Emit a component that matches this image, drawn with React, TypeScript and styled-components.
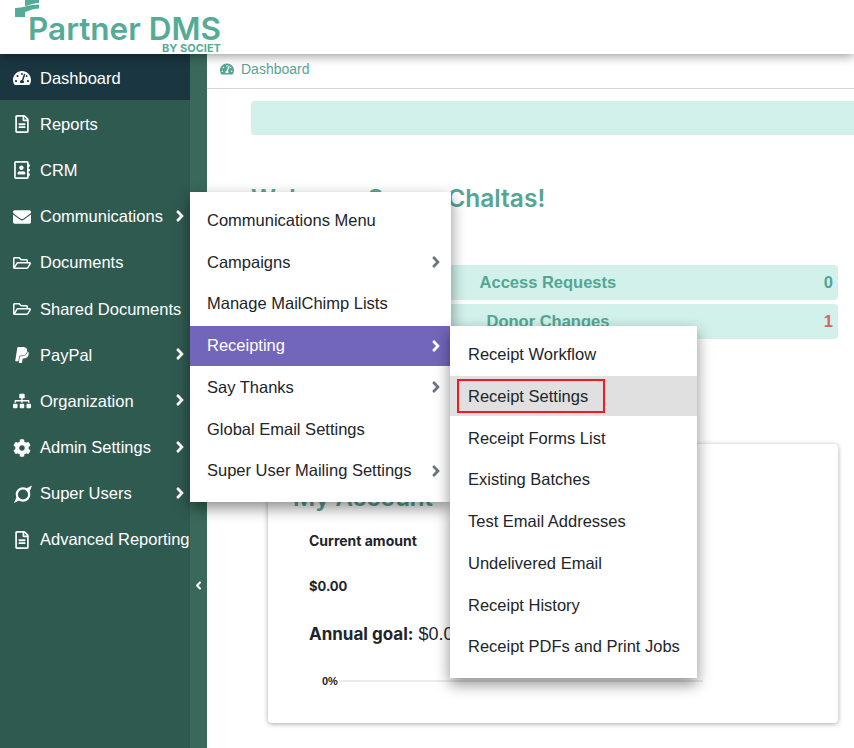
import styled, { createGlobalStyle } from "styled-components";
import {
  FaTachometerAlt,
  FaRegFileAlt,
  FaRegAddressBook,
  FaEnvelope,
  FaRegFolderOpen,
  FaPaypal,
  FaSitemap,
  FaCog,
  FaAngleRight,
  FaAngleLeft,
} from "react-icons/fa";

const Global = createGlobalStyle`
  html, body { margin: 0; padding: 0; }
  body {
    background: #fff;
    font-family: "Liberation Sans", Arial, sans-serif;
    font-size: 16.5px;
    color: #212529;
    overflow: hidden;
  }
`;

const Page = styled.div`
  width: 854px;
  height: 748px;
  overflow: hidden;
  display: flex;
  flex-direction: column;
`;

const Header = styled.header`
  height: 54px;
  flex: none;
  background: #fff;
  position: relative;
  z-index: 5;
  box-shadow: 0 2px 10px rgba(0, 0, 0, 0.4);
  display: flex;
  padding-left: 15px;
`;

const LogoWrap = styled.div`
  display: flex;
  flex-direction: column;
  align-items: flex-start;
`;

const LogoMark = styled.svg`
  display: block;
  width: 25px;
  height: 17px;
`;

const LogoName = styled.div`
  font-family: Inter, "Liberation Sans", sans-serif;
  font-weight: 600;
  font-size: 31.5px;
  line-height: 24px;
  color: #55ab96;
  margin: 0 0 0 13px;
  white-space: nowrap;
`;

const LogoSub = styled.div`
  font-family: Inter, "Liberation Sans", sans-serif;
  font-weight: 700;
  font-size: 11px;
  line-height: 10px;
  color: #55ab96;
  align-self: flex-end;
  margin: 2px 0 0 0;
`;

const Body = styled.div`
  flex: 1;
  display: flex;
  min-height: 0;
`;

const Sidebar = styled.aside`
  width: 207px;
  flex: none;
  display: flex;
  background: #39695b;
  position: relative;
  z-index: 4;
`;

const Nav = styled.nav`
  width: 190px;
  flex: none;
  background: #2f5a50;
`;

const Strip = styled.div`
  flex: 1;
  display: flex;
  align-items: flex-start;
  justify-content: center;
  padding-top: 525px;
  color: #fff;
  font-size: 13px;
`;

const NavItem = styled.div<{ $active?: boolean }>`
  position: relative;
  height: 46.2px;
  box-sizing: border-box;
  display: flex;
  align-items: center;
  padding: 2px 0 0 13px;
  color: #fff;
  white-space: nowrap;
  background: ${({ $active }) => ($active ? "#1a3640" : "transparent")};
`;

const NavIcon = styled.span`
  width: 27px;
  flex: none;
  display: flex;
  font-size: 18px;
`;

const NavArrow = styled.span`
  position: absolute;
  left: 171px;
  top: 14px;
  display: flex;
  font-size: 18px;
`;

const Menu = styled.div<{ $left: number; $width: number; $top: number; $pad: number }>`
  position: absolute;
  top: ${({ $top }) => $top}px;
  left: ${({ $left }) => $left}px;
  width: ${({ $width }) => $width}px;
  padding: ${({ $pad }) => $pad}px 0 9.5px;
  box-sizing: border-box;
  background: #fff;
  color: #212529;
  box-shadow: 0 6px 14px rgba(0, 0, 0, 0.45);
  z-index: 6;
`;

const MenuRow = styled.div<{ $active?: boolean; $hover?: boolean; $inset: number }>`
  position: relative;
  height: 40px;
  margin-bottom: 1.75px;
  display: flex;
  align-items: center;
  justify-content: space-between;
  padding: 0 6px 0 ${({ $inset }) => $inset}px;
  background: ${({ $active, $hover }) => ($active ? "#7266bb" : $hover ? "#e0e0e0" : "transparent")};
  color: ${({ $active }) => ($active ? "#fff" : "#212529")};
`;

const MenuArrow = styled.span<{ $light?: boolean }>`
  display: flex;
  font-size: 18px;
  color: ${({ $light }) => ($light ? "#fff" : "#6c757d")};
`;

const Outlined = styled.span`
  border: 2px solid #ed1c24;
  margin-left: -11px;
  padding: 0 15px 0 9px;
  height: 30px;
  display: flex;
  align-items: center;
`;

const Main = styled.main`
  flex: 1;
  min-width: 0;
  display: flex;
  flex-direction: column;
`;

const Crumb = styled.div`
  height: 30px;
  flex: none;
  border-bottom: 1px solid #d6d6d6;
  display: flex;
  align-items: center;
  gap: 7px;
  padding: 0 0 4px 13px;
  font-size: 14px;
  color: #55a595;
  svg {
    font-size: 14px;
  }
`;

const Content = styled.div`
  flex: 1;
  padding: 12px 16px 0 44px;
  display: flex;
  flex-direction: column;
`;

const Banner = styled.div`
  height: 34px;
  margin-right: -16px;
  background: #d2f1eb;
  border-radius: 4px 0 0 4px;
  flex: none;
`;

const Welcome = styled.h1`
  margin: 49px 0 0;
  font-family: Inter, "Liberation Sans", sans-serif;
  font-size: 24.5px;
  line-height: 29px;
  font-weight: 600;
  color: #55a595;
`;

const Stats = styled.div`
  margin-top: 52px;
  display: flex;
  flex-direction: column;
  gap: 4px;
`;

const Stat = styled.div`
  height: 35px;
  background: #d2f1eb;
  border-radius: 4px;
  display: flex;
  align-items: center;
  padding: 0 5px 0 21px;
  font-weight: 700;
  color: #55a595;
`;

const StatLabel = styled.span`
  flex: 1;
  text-align: center;
`;

const StatCount = styled.span<{ $alert?: boolean }>`
  color: ${({ $alert }) => ($alert ? "#d0675f" : "#55a595")};
`;

const Card = styled.section`
  margin: 105px 0 0 17px;
  height: 279px;
  flex: none;
  box-sizing: border-box;
  padding: 39px 25px 0;
  background: #fff;
  border-radius: 4px;
  box-shadow: 0 1px 5px rgba(0, 0, 0, 0.35);
`;

const CardTitle = styled.h2`
  margin: 0;
  font-family: Inter, "Liberation Sans", sans-serif;
  font-size: 24px;
  line-height: 29px;
  font-weight: 600;
  color: #55a595;
`;

const Small = styled.div<{ $top: number; $size: number }>`
  font-family: Inter, "Liberation Sans", sans-serif;
  font-size: ${({ $size }) => $size}px;
  line-height: 16px;
  font-weight: 700;
  color: #212529;
  margin: ${({ $top }) => $top}px 0 0 16px;
`;

const Goal = styled.div`
  font-size: 18px;
  line-height: 22px;
  margin: 29px 0 0 16px;
  color: #212529;
  b {
    font-family: Inter, "Liberation Sans", sans-serif;
    font-weight: 700;
    font-size: 17px;
  }
`;

const Progress = styled.div`
  margin: 30px 0 0 29px;
  width: 381px;
  display: flex;
  align-items: center;
  gap: 1px;
  font-size: 11px;
  font-weight: 700;
  color: #212529;
  &::after {
    content: "";
    flex: 1;
    height: 2px;
    background: #e9ecef;
  }
`;

const receiptMenu = [
  "Receipt Workflow",
  "Receipt Settings",
  "Receipt Forms List",
  "Existing Batches",
  "Test Email Addresses",
  "Undelivered Email",
  "Receipt History",
  "Receipt PDFs and Print Jobs",
];

const commsMenu = [
  { label: "Communications Menu" },
  { label: "Campaigns", more: true },
  { label: "Manage MailChimp Lists" },
  { label: "Receipting", more: true, active: true },
  { label: "Say Thanks", more: true },
  { label: "Global Email Settings" },
  { label: "Super User Mailing Settings", more: true },
];

function SuperIcon() {
  return (
    <svg width="20" height="20" viewBox="0 0 20 20" fill="none" stroke="currentColor">
      <circle cx="10" cy="10.5" r="6.2" strokeWidth="2.2" />
      <path d="M13 4.5 L19 1.5 L16.5 8" fill="currentColor" stroke="none" />
      <path d="M7 16 L1 19 L3.5 13" fill="currentColor" stroke="none" />
    </svg>
  );
}

const nav = [
  { label: "Dashboard", icon: <FaTachometerAlt />, active: true },
  { label: "Reports", icon: <FaRegFileAlt /> },
  { label: "CRM", icon: <FaRegAddressBook /> },
  { label: "Communications", icon: <FaEnvelope />, more: true, open: true },
  { label: "Documents", icon: <FaRegFolderOpen /> },
  { label: "Shared Documents", icon: <FaRegFolderOpen /> },
  { label: "PayPal", icon: <FaPaypal />, more: true },
  { label: "Organization", icon: <FaSitemap />, more: true },
  { label: "Admin Settings", icon: <FaCog />, more: true },
  { label: "Super Users", icon: <SuperIcon />, more: true },
  { label: "Advanced Reporting", icon: <FaRegFileAlt /> },
];

function ReceiptMenu() {
  return (
    <Menu $left={260} $width={247} $top={0} $pad={9}>
      {receiptMenu.map((label) =>
        label === "Receipt Settings" ? (
          <MenuRow key={label} $inset={18} $hover>
            <Outlined>{label}</Outlined>
          </MenuRow>
        ) : (
          <MenuRow key={label} $inset={18}>
            {label}
          </MenuRow>
        )
      )}
    </Menu>
  );
}

function CommsMenu() {
  return (
    <Menu $left={190} $width={261} $top={-0.6} $pad={8.3}>
      {commsMenu.map((row) => (
        <MenuRow key={row.label} $inset={17} $active={row.active}>
          {row.label}
          {row.more && (
            <MenuArrow $light={row.active}>
              <FaAngleRight />
            </MenuArrow>
          )}
          {row.active && <ReceiptMenu />}
        </MenuRow>
      ))}
    </Menu>
  );
}

export default function App() {
  return (
    <Page>
      <Global />
      <Header>
        <LogoWrap>
          <LogoMark viewBox="0 0 25 17">
            <path d="M10 0 H24 V3 C18 3 15 5.5 10 6 Z" fill="#55ab96" />
            <path d="M0 8 C8 8 14 4.5 24 4.5 V8.5 C17 8.5 13 11.5 10 12 V17 H0 Z" fill="#55ab96" />
          </LogoMark>
          <LogoName>Partner DMS</LogoName>
          <LogoSub>BY SOCIET</LogoSub>
        </LogoWrap>
      </Header>
      <Body>
        <Sidebar>
          <Nav>
            {nav.map((item) => (
              <NavItem key={item.label} $active={item.active}>
                <NavIcon>{item.icon}</NavIcon>
                {item.label}
                {item.more && (
                  <NavArrow>
                    <FaAngleRight />
                  </NavArrow>
                )}
                {item.open && <CommsMenu />}
              </NavItem>
            ))}
          </Nav>
          <Strip>
            <FaAngleLeft />
          </Strip>
        </Sidebar>
        <Main>
          <Crumb>
            <FaTachometerAlt />
            Dashboard
          </Crumb>
          <Content>
            <Banner />
            <Welcome>Welcome Susan Chaltas!</Welcome>
            <Stats>
              <Stat>
                <StatLabel>Access Requests</StatLabel>
                <StatCount>0</StatCount>
              </Stat>
              <Stat>
                <StatLabel>Donor Changes</StatLabel>
                <StatCount $alert>1</StatCount>
              </Stat>
            </Stats>
            <Card>
              <CardTitle>My Account</CardTitle>
              <Small $top={21} $size={14}>Current amount</Small>
              <Small $top={29} $size={13}>$0.00</Small>
              <Goal>
                <b>Annual goal:</b> $0.00
              </Goal>
              <Progress>0%</Progress>
            </Card>
          </Content>
        </Main>
      </Body>
    </Page>
  );
}
